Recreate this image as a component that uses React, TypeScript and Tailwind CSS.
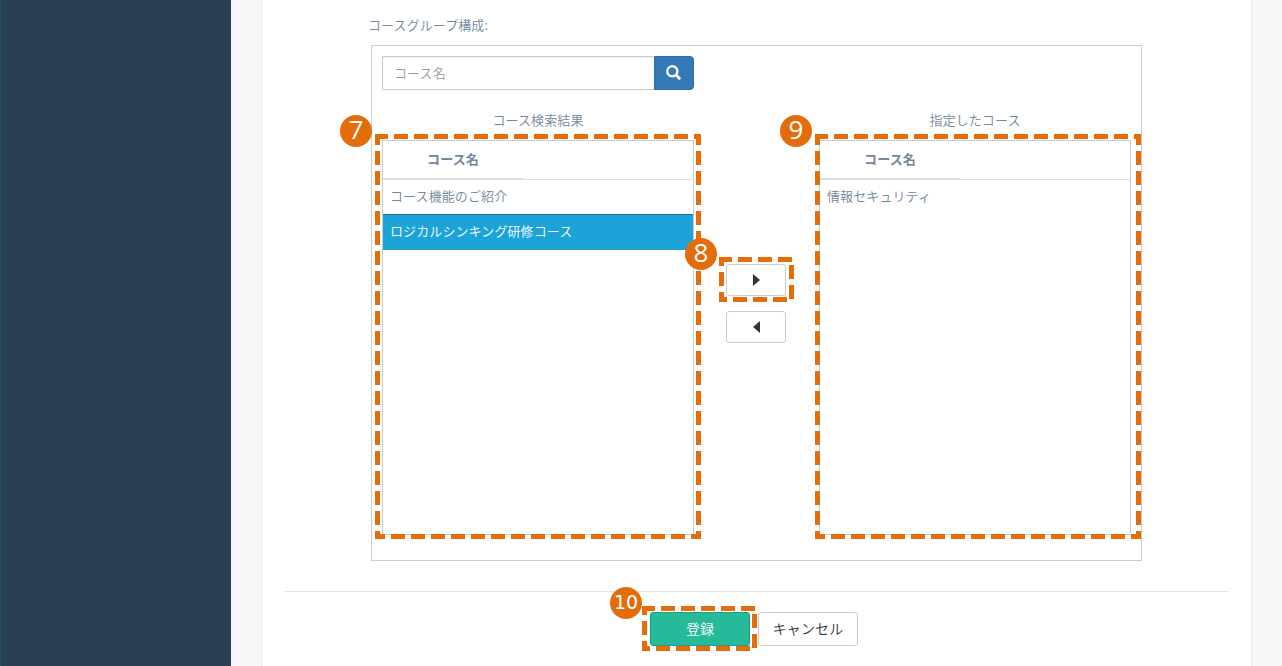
import React from 'react';

type FrameProps = {
  w: number;
  h: number;
  // dash start per side: top, right, bottom, left
  starts: [number, number, number, number];
  // visible range ends for sides that stop short of the corner
  topEnd?: number;
  rightFrom?: number;
  rightEnd?: number;
  bottomEnd?: number;
  className: string;
};

function DashedFrame({ w, h, starts, topEnd = w, rightFrom = 0, rightEnd = h, bottomEnd = w, className }: FrameProps) {
  const [t, r, b, l] = starts;
  return (
    <svg
      className={`absolute z-10 pointer-events-none max-w-none ${className}`}
      width={w}
      height={h}
      stroke="#e46c0a"
      strokeWidth="5"
      strokeDasharray="14 6"
    >
      <line x1="0" y1="2.5" x2={topEnd} y2="2.5" strokeDashoffset={-t} />
      <line x1={w - 2.5} y1={rightFrom} x2={w - 2.5} y2={rightEnd} strokeDashoffset={rightFrom - r} />
      <line x1="0" y1={h - 2.5} x2={bottomEnd} y2={h - 2.5} strokeDashoffset={-b} />
      <line x1="2.5" y1="0" x2="2.5" y2={h} strokeDashoffset={-l} />
    </svg>
  );
}

function ListFrame() {
  return <DashedFrame w={326} h={405} starts={[-1, -3, -4, -3]} className="-top-[7px]" />;
}

function ButtonFrame({ w, className }: { w: number; className: string }) {
  return (
    <DashedFrame
      w={w}
      h={45}
      starts={[-1, 8, -6, -5]}
      topEnd={w - 2}
      rightFrom={8}
      rightEnd={42}
      bottomEnd={w - 7}
      className={className}
    />
  );
}

function Badge({ n, className }: { n: number; className: string }) {
  return (
    <span
      className={`absolute z-20 flex size-8 items-center justify-center rounded-full bg-[#e46c0a] leading-none font-normal tracking-normal text-white ${
        n > 9 ? "pb-0.5 font-['DejaVu_Sans',sans-serif] text-[19px]" : "pb-1 font-['Open_Sans',sans-serif] text-[26px]"
      } ${className}`}
    >
      {n}
    </span>
  );
}

function CourseList({ title, rows, selected }: { title: string; rows: string[]; selected?: string }) {
  return (
    <div className="w-[312px]">
      <div className="flex h-10 items-center justify-center">{title}</div>
      <div className="h-[395px] border border-[#ccc]">
        <div className="h-[39px] border-b border-[#ddd]">
          <div className="h-[38px] w-[140px] border-b border-[#ddd] text-center font-bold leading-9">コース名</div>
        </div>
        {rows.map((row) => (
          <div
            key={row}
            className={`px-[7px] leading-8 ${
              row === selected ? 'h-9 border-t border-[#2b6da5] bg-[#1ca4d8] text-white' : 'h-[34px]'
            }`}
          >
            {row}
          </div>
        ))}
      </div>
    </div>
  );
}

export default function App() {
  return (
    <div className="flex h-[666px] w-[1282px] overflow-hidden bg-[#f7f7f7] font-['Noto_Sans_CJK_JP',sans-serif] text-[13px] font-[350] tracking-[0.1px] text-[#73879c]">
      <aside className="w-[231px] shrink-0 border-l border-[#1a566e] bg-[#2a3f54]" />

      <main className="ml-[30px] w-[991px] shrink-0 border-x border-[#e6e9ed] bg-white px-[22px]">
        <div className="ml-[84px] flex h-[45px] items-center pt-[5px]">コースグループ構成:</div>

        <section className="ml-[87px] h-[516px] w-[771px] border border-[#ccc] px-[10px] pt-[10px]">
          {/* Search */}
          <div className="flex h-[34px] w-[312px]">
            <input
              type="text"
              placeholder="コース名"
              className="h-full w-[272px] border border-r-0 border-[#ccc] pb-0.5 pl-[11px] text-[13px] shadow-[inset_0_1px_1px_rgba(0,0,0,0.075)] outline-none placeholder:text-[#999]"
            />
            <button className="flex h-full w-10 items-center justify-center rounded-r border border-[#2e6da4] bg-[#337ab7] pr-px">
              <svg width="15" height="15" viewBox="0 0 14 14" fill="none" stroke="#fff" className="-mt-0.5">
                <circle cx="5.9" cy="5.9" r="4.7" strokeWidth="2.2" />
                <path d="M9.4 9.4 L12.4 12.4" strokeWidth="2.7" strokeLinecap="round" />
              </svg>
            </button>
          </div>

          {/* Lists */}
          <div className="mt-[10px] flex">
            <div className="relative">
              <CourseList
                title="コース検索結果"
                rows={['コース機能のご紹介', 'ロジカルシンキング研修コース']}
                selected="ロジカルシンキング研修コース"
              />
              <div className="absolute -left-[7px] top-[41px]">
                <ListFrame />
              </div>
              <Badge n={7} className="-left-[42px] top-[15px]" />
            </div>

            <div className="flex w-[125px] flex-col items-center gap-[15px] pt-[164px]">
              <div className="relative -ml-px">
                <button className="flex h-8 w-[60px] items-center justify-center rounded-[3px] border border-[#ccc] bg-white">
                  <svg width="7" height="12" viewBox="0 0 7 12" fill="#333">
                    <path d="M0 0 L7 6 L0 12Z" />
                  </svg>
                </button>
                <ButtonFrame w={75} className="-left-[7px] -top-[7px]" />
                <Badge n={8} className="-left-[41px] -top-[26px]" />
              </div>
              <button className="-ml-px flex h-8 w-[60px] items-center justify-center rounded-[3px] border border-[#ccc] bg-white">
                <svg width="7" height="12" viewBox="0 0 7 12" fill="#333">
                  <path d="M7 0 L0 6 L7 12Z" />
                </svg>
              </button>
            </div>

            <div className="relative">
              <CourseList title="指定したコース" rows={['情報セキュリティ']} />
              <div className="absolute -left-1 top-[41px]">
                <ListFrame />
              </div>
              <Badge n={9} className="-left-[39px] top-[15px]" />
            </div>
          </div>
        </section>

        {/* Actions */}
        <div className="mt-[30px] flex justify-center gap-2 border-t border-[#e3e3e3] pt-5 text-sm">
          <div className="relative ml-[-5px]">
            <button className="h-[34px] w-[100px] rounded-[3px] border border-[#169f85] bg-[#26b99a] pb-0.5 text-white">登録</button>
            <ButtonFrame w={115} className="-left-2 -top-[6px]" />
            <Badge n={10} className="-left-10 -top-[25px]" />
          </div>
          <button className="h-[34px] w-[100px] rounded-[3px] border border-[#ccc] bg-white pb-0.5 text-[#333]">キャンセル</button>
        </div>
      </main>
    </div>
  );
}
